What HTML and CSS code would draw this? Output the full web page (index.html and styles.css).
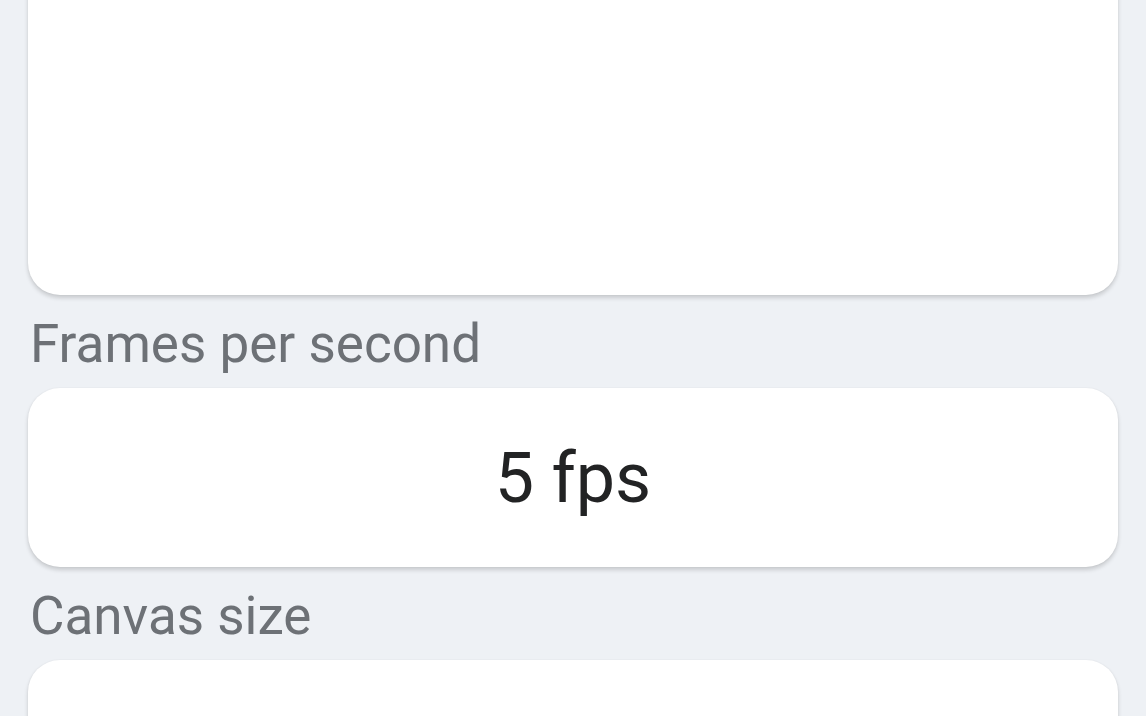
FILE: index.html
```html
<!DOCTYPE html>
<html lang="en">
<head>
<meta charset="utf-8">
<title>Settings</title>
<link rel="stylesheet" href="styles.css">
</head>
<body>
<main class="screen">
  <section class="card card-preview"></section>
  <div class="label">Frames per second</div>
  <section class="card card-value"><span class="value">5 fps</span></section>
  <div class="label">Canvas size</div>
  <section class="card card-value"></section>
</main>
</body>
</html>
```
FILE: styles.css
```css
html, body {
  margin: 0;
  padding: 0;
  background: #eef1f5;
  overflow: hidden;
  height: 716px;
}
body {
  font-family: Roboto, "Liberation Sans", sans-serif;
}
.screen {
  display: flex;
  flex-direction: column;
  padding: 0 28px;
}
.card {
  background: #ffffff;
  border-radius: 32px;
  box-shadow: 0 3px 4px rgba(0, 0, 0, 0.16), 0 0 2px rgba(0, 0, 0, 0.06);
  flex-shrink: 0;
}
.card-preview {
  height: 335px;
  margin-top: -40px;
}
.label {
  margin: 19px 0 14px 2px;
  height: 60px;
  line-height: 60px;
  font-size: 53px;
  color: #6d7176;
}
.card-value {
  height: 179px;
  display: flex;
  align-items: center;
  justify-content: center;
}
.value {
  font-size: 70px;
  line-height: 1;
  color: #222324;
}
```
